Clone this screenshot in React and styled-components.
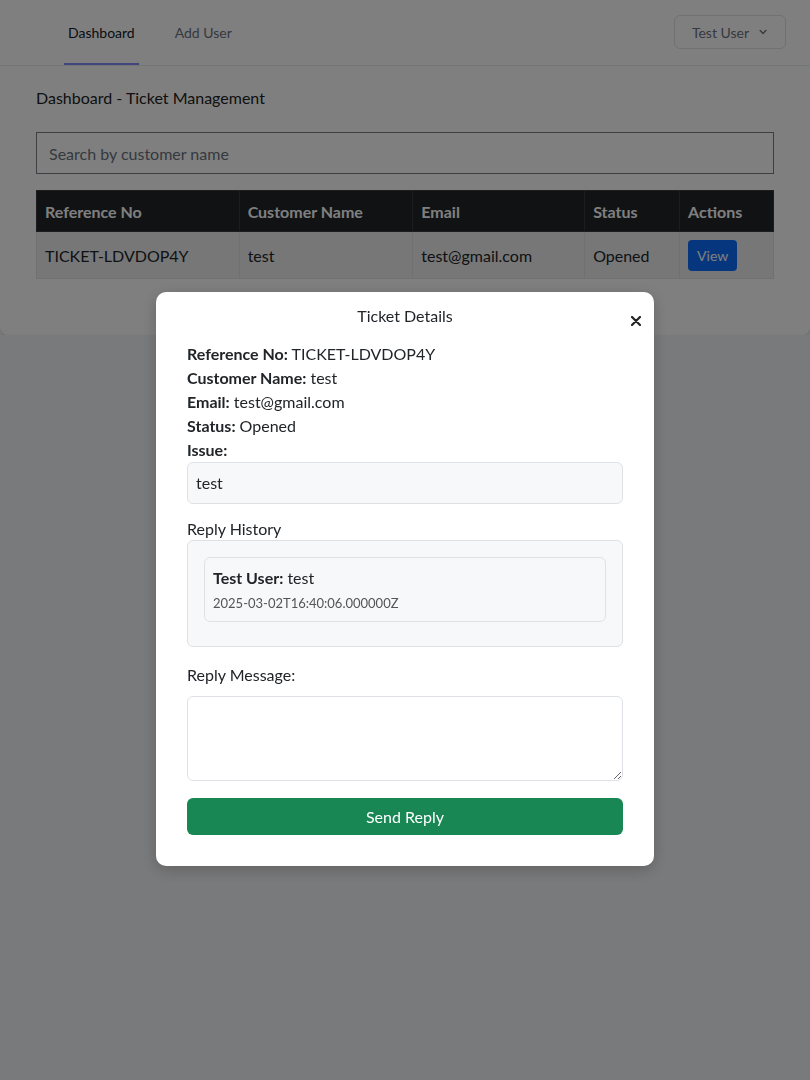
import React from 'react'
import styled, { createGlobalStyle } from 'styled-components'

const GlobalStyle = createGlobalStyle`
  * { box-sizing: border-box; }
  body {
    margin: 0;
    background: #f3f4f6;
    font-family: Lato, "Noto Sans", sans-serif;
    color: #212529;
  }
`

const Nav = styled.nav`
  height: 66px;
  background: #fff;
  border-bottom: 1px solid #eceef1;
  display: flex;
  align-items: stretch;
  justify-content: space-between;
  padding: 0 24px 0 64px;
`

const NavLinks = styled.div`
  display: flex;
  gap: 32px;
`

const NavLink = styled.a`
  display: flex;
  align-items: center;
  padding: 2px 4px 0;
  font-size: 14px;
  color: ${p => (p.active ? '#111827' : '#6b7280')};
  border-bottom: 2px solid ${p => (p.active ? '#818cf8' : 'transparent')};
  text-decoration: none;
`

const UserButton = styled.button`
  align-self: flex-start;
  margin-top: 15px;
  height: 34px;
  width: 112px;
  display: flex;
  align-items: center;
  justify-content: center;
  gap: 7px;
  padding: 0 0 0 2px;
  background: #fff;
  border: 1px solid #e0e2e6;
  border-radius: 6px;
  font-family: inherit;
  font-size: 14px;
  color: #6b7280;
`

const Card = styled.main`
  background: #fff;
  border-radius: 0 0 8px 8px;
  box-shadow: 0 1px 3px rgba(0, 0, 0, 0.12);
  padding: 20px 36px 40px;
`

const Title = styled.h2`
  margin: 0;
  font-size: 16px;
  line-height: 24px;
  font-weight: 400;
  color: #222;
`

const Search = styled.input`
  display: block;
  width: 100%;
  height: 42px;
  margin-top: 22px;
  padding: 0 12px;
  border: 1px solid #7b7f87;
  font-family: inherit;
  font-size: 16px;
  color: #212529;
  &::placeholder { color: #6b7280; }
`

const Table = styled.table`
  width: 100%;
  margin: 16px 0 16px;
  border-collapse: collapse;
  font-size: 16px;
`

const Th = styled.th`
  width: ${p => p.w}px;
  background: #212529;
  color: #fff;
  font-weight: 700;
  text-align: left;
  padding: 0 8px;
  height: 41px;
  border: 1px solid #373b3e;
`

const Td = styled.td`
  background: #eeeff0;
  padding: 0 8px;
  height: 47px;
  border: 1px solid #dee2e6;
`

const ViewButton = styled.button`
  background: #0d6efd;
  color: #fff;
  border: 0;
  border-radius: 4px;
  padding: 0 9px;
  height: 31px;
  font-family: inherit;
  font-size: 14px;
`

const Overlay = styled.div`
  position: fixed;
  inset: 0;
  background: rgba(0, 0, 0, 0.5);
  display: flex;
  justify-content: center;
  align-items: flex-start;
  padding-top: 292px;
`

const Modal = styled.div`
  width: 498px;
  background: #fff;
  border-radius: 10px;
  box-shadow: 0 4px 16px rgba(0, 0, 0, 0.2);
`

const ModalHeader = styled.div`
  display: grid;
  grid-template-columns: 1fr auto 1fr;
  padding: 12px 10px 0;
`

const ModalTitle = styled.h3`
  grid-column: 2;
  margin: 0;
  font-size: 16px;
  line-height: 24px;
  font-weight: 400;
  color: #212529;
`

const Close = styled.button`
  justify-self: end;
  margin-top: 9px;
  width: 16px;
  height: 16px;
  padding: 0;
  border: 0;
  background: none;
  display: flex;
  align-items: center;
  justify-content: center;
`

const ModalBody = styled.div`
  padding: 13px 31px 31px;
`

const Line = styled.div`
  font-size: 16px;
  line-height: 24px;
  b { font-weight: 700; }
`

const Box = styled.div`
  background: #f7f8fa;
  border: 1px solid #dee2e6;
  border-radius: 6px;
  padding: ${p => p.pad || 8}px;
  font-size: 16px;
  line-height: 24px;
`

const Label = styled.div`
  margin-top: ${p => p.top}px;
  font-size: 16px;
  line-height: ${p => p.lh}px;
`

const ReplyItem = styled(Box)`
  margin-bottom: 8px;
`

const Stamp = styled.div`
  margin-top: 3px;
  font-size: 13px;
  line-height: 20px;
  color: #555;
`

const ReplyInput = styled.textarea`
  display: block;
  width: 100%;
  height: 85px;
  margin-top: 9px;
  border: 1px solid #dee2e6;
  border-radius: 6px;
  padding: 6px 12px;
  font-family: inherit;
  font-size: 16px;
`

const SendButton = styled.button`
  display: block;
  width: 100%;
  height: 37px;
  margin-top: 17px;
  background: #198754;
  color: #fff;
  border: 0;
  border-radius: 6px;
  font-family: inherit;
  font-size: 16px;
`

const Chevron = () => (
  <svg width="14" height="14" viewBox="0 0 20 20" fill="currentColor">
    <path d="M5.3 7.3a1 1 0 0 1 1.4 0L10 10.6l3.3-3.3a1 1 0 1 1 1.4 1.4l-4 4a1 1 0 0 1-1.4 0l-4-4a1 1 0 0 1 0-1.4z" />
  </svg>
)

const CloseIcon = () => (
  <svg width="10" height="10" viewBox="0 0 10 10">
    <path d="M1 1L9 9M9 1L1 9" stroke="#222" strokeWidth="2.2" strokeLinecap="round" />
  </svg>
)

const columns = [
  ['Reference No', 203],
  ['Customer Name', 174],
  ['Email', 172],
  ['Status', 95],
  ['Actions', 94],
]

export default function App() {
  return (
    <>
      <GlobalStyle />
      <Nav>
        <NavLinks>
          <NavLink active>Dashboard</NavLink>
          <NavLink>Add User</NavLink>
        </NavLinks>
        <UserButton>
          Test User <Chevron />
        </UserButton>
      </Nav>
      <Card>
        <Title>Dashboard - Ticket Management</Title>
        <Search placeholder="Search by customer name" />
        <Table>
          <thead>
            <tr>
              {columns.map(([name, w]) => (
                <Th key={name} w={w}>{name}</Th>
              ))}
            </tr>
          </thead>
          <tbody>
            <tr>
              <Td>TICKET-LDVDOP4Y</Td>
              <Td>test</Td>
              <Td>test@gmail.com</Td>
              <Td>Opened</Td>
              <Td><ViewButton>View</ViewButton></Td>
            </tr>
          </tbody>
        </Table>
      </Card>

      <Overlay>
        <Modal>
          <ModalHeader>
            <ModalTitle>Ticket Details</ModalTitle>
            <Close><CloseIcon /></Close>
          </ModalHeader>
          <ModalBody>
            <Line><b>Reference No:</b> TICKET-LDVDOP4Y</Line>
            <Line><b>Customer Name:</b> test</Line>
            <Line><b>Email:</b> test@gmail.com</Line>
            <Line><b>Status:</b> Opened</Line>
            <Line><b>Issue:</b></Line>
            <Box>test</Box>

            <Label top={14} lh={22}>Reply History</Label>
            <Box pad={16}>
              <ReplyItem>
                <div><b>Test User:</b> test</div>
                <Stamp>2025-03-02T16:40:06.000000Z</Stamp>
              </ReplyItem>
            </Box>

            <Label top={16} lh={24}>Reply Message:</Label>
            <ReplyInput />
            <SendButton>Send Reply</SendButton>
          </ModalBody>
        </Modal>
      </Overlay>
    </>
  )
}
